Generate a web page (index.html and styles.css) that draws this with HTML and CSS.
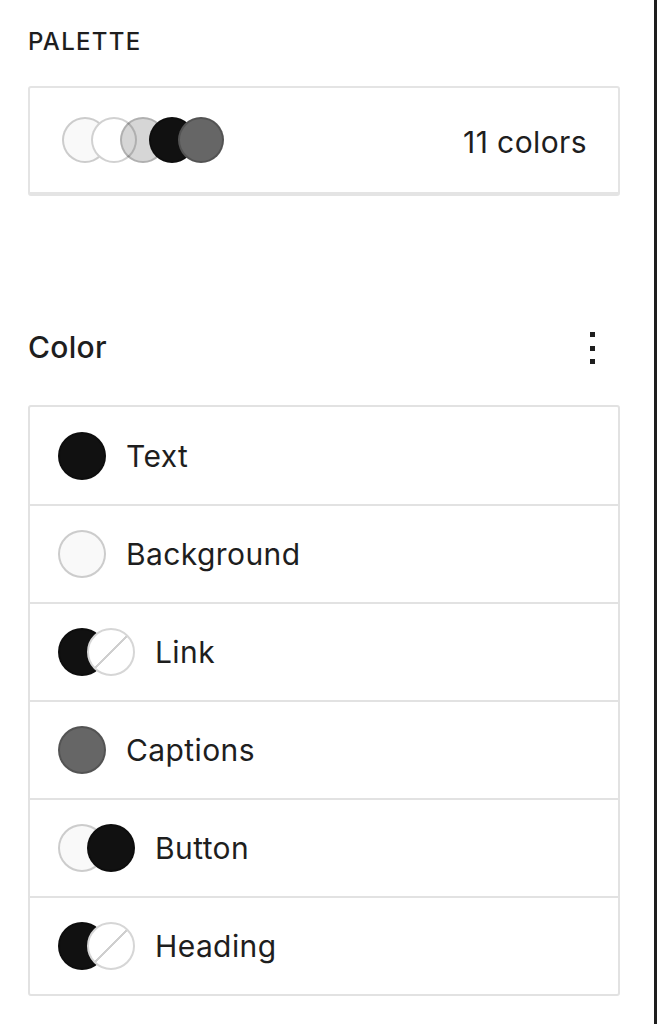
FILE: index.html
```html
<!DOCTYPE html>
<html lang="en">
<head>
    <meta charset="UTF-8">
    <meta name="viewport" content="width=device-width, initial-scale=1.0">
    <title>Global Styles - Colors</title>
    <link rel="stylesheet" href="styles.css">
</head>
<body>
    <div class="sidebar">
        <h2 class="section-label">Palette</h2>

        <div class="palette-card">
            <div class="palette-stack">
                <span class="dot dot-offwhite"></span>
                <span class="dot dot-white"></span>
                <span class="dot dot-light"></span>
                <span class="dot dot-black"></span>
                <span class="dot dot-gray"></span>
            </div>
            <span class="palette-count">11 colors</span>
        </div>

        <div class="panel-header">
            <h3 class="panel-title">Color</h3>
            <button class="kebab" aria-label="Color options">
                <svg width="24" height="40" viewBox="0 0 24 40">
                    <rect x="10" y="5" width="5" height="5" fill="#1e1e1e"/>
                    <rect x="10" y="19" width="5" height="5" fill="#1e1e1e"/>
                    <rect x="10" y="32" width="5" height="5" fill="#1e1e1e"/>
                </svg>
            </button>
        </div>

        <div class="item-group">
            <div class="item">
                <span class="swatches"><span class="swatch dot-black"></span></span>
                <span class="item-label">Text</span>
            </div>
            <div class="item">
                <span class="swatches"><span class="swatch dot-offwhite"></span></span>
                <span class="item-label">Background</span>
            </div>
            <div class="item">
                <span class="swatches">
                    <span class="swatch dot-black"></span>
                    <span class="swatch swatch-none"></span>
                </span>
                <span class="item-label">Link</span>
            </div>
            <div class="item">
                <span class="swatches"><span class="swatch dot-gray"></span></span>
                <span class="item-label">Captions</span>
            </div>
            <div class="item">
                <span class="swatches">
                    <span class="swatch dot-offwhite"></span>
                    <span class="swatch dot-black"></span>
                </span>
                <span class="item-label">Button</span>
            </div>
            <div class="item">
                <span class="swatches">
                    <span class="swatch dot-black"></span>
                    <span class="swatch swatch-none"></span>
                </span>
                <span class="item-label">Heading</span>
            </div>
        </div>
    </div>
</body>
</html>
```

FILE: styles.css
```css
* {
    box-sizing: border-box;
}
body {
    margin: 0;
    background: #fff;
    font-family: Inter, "Noto Sans", sans-serif;
    color: #1e1e1e;
}
.sidebar {
    width: 657px;
    min-height: 1024px;
    padding: 28px 34px 0 28px;
    border-right: 3px solid #1e1e1e;
    background: #fff;
}
.section-label {
    margin: 0;
    font-size: 24px;
    font-weight: 500;
    line-height: 28px;
    text-transform: uppercase;
    letter-spacing: 1.3px;
}
.palette-card {
    display: flex;
    align-items: center;
    justify-content: space-between;
    height: 110px;
    margin-top: 30px;
    padding: 0 31px 0 32px;
    border: 2px solid #e4e4e4;
    border-bottom-width: 4px;
    border-radius: 3px;
}
.palette-stack {
    display: flex;
}
.dot {
    width: 46px;
    height: 46px;
    border-radius: 50%;
    border: 2px solid rgba(0, 0, 0, 0.18);
}
.dot + .dot {
    margin-left: -17px;
}
.dot-offwhite {
    background: #f9f9f9;
}
.dot-white {
    background: #fff;
}
.dot-light {
    background: rgba(0, 0, 0, 0.16);
}
.dot-black {
    background: #111;
}
.dot-gray {
    background: #666;
}
.palette-count {
    font-size: 30px;
    letter-spacing: 0.4px;
    margin-top: 3px;
}
.panel-header {
    display: flex;
    align-items: center;
    justify-content: space-between;
    margin-top: 131px;
    height: 40px;
}
.panel-title {
    margin: 0;
    font-size: 30px;
    font-weight: 500;
    letter-spacing: 0.3px;
}
.kebab {
    width: 24px;
    height: 40px;
    margin-right: 16px;
    padding: 0;
    border: none;
    background: none;
}
.kebab svg {
    display: block;
}
.item-group {
    margin-top: 38px;
    border: 2px solid #e2e2e2;
    border-radius: 3px;
}
.item {
    display: flex;
    align-items: center;
    gap: 20px;
    height: 98px;
    padding: 0 28px;
    border-top: 2px solid #e2e2e2;
}
.item:first-child {
    height: 97px;
    border-top: none;
}
.swatches {
    display: flex;
}
.swatch {
    width: 48px;
    height: 48px;
    border-radius: 50%;
    border: 2px solid rgba(0, 0, 0, 0.18);
}
.swatch + .swatch {
    margin-left: -19px;
}
.swatch-none {
    background: #fff linear-gradient(135deg, transparent calc(50% - 1px), #cfcfcf calc(50% - 1px), #cfcfcf calc(50% + 1px), transparent calc(50% + 1px));
    border-color: #d6d6d6;
}
.item-label {
    font-size: 30px;
    letter-spacing: 0.4px;
}
```
